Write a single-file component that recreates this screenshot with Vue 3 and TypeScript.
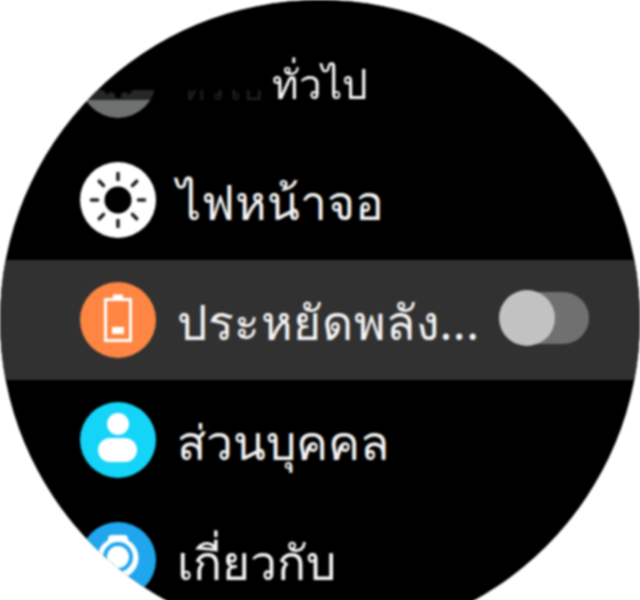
<script setup lang="ts">
const sunRays = [0, 45, 90, 135, 180, 225, 270, 315];
const gearTeeth = [135, 180, 225];
</script>

<template>
  <div class="watch">
    <div class="header">
      <span class="title">ทั่วไป</span>
    </div>

    <div class="list">
      <div class="row">
        <svg class="icon" viewBox="0 0 76 76">
          <circle cx="38" cy="38" r="38" fill="#8a8f8c" />
          <circle cx="38" cy="38" r="14" fill="#000" />
          <rect
            v-for="a in gearTeeth"
            :key="a"
            x="35"
            y="20"
            width="6"
            height="8"
            fill="#000"
            :transform="`rotate(${a} 38 38)`"
          />
        </svg>
        <span class="label">ทั่วไป</span>
      </div>

      <div class="row">
        <svg class="icon" viewBox="0 0 76 76">
          <circle cx="38" cy="38" r="38" fill="#fff" />
          <circle cx="38" cy="38" r="13.5" fill="#000" />
          <line
            v-for="a in sunRays"
            :key="a"
            x1="38"
            y1="11.5"
            x2="38"
            y2="17.5"
            stroke="#222"
            stroke-width="3.6"
            stroke-linecap="round"
            :transform="`rotate(${a} 38 38)`"
          />
        </svg>
        <span class="label">ไฟหน้าจอ</span>
      </div>

      <div class="row active">
        <svg class="icon" viewBox="0 0 76 76">
          <circle cx="38" cy="38" r="38" fill="#ff8642" />
          <rect x="33" y="12.5" width="10" height="5" fill="#fff" />
          <rect x="25.5" y="17.5" width="25" height="41" fill="none" stroke="#fff" stroke-width="3" />
          <rect x="32" y="45" width="12" height="7" fill="#fff" />
        </svg>
        <span class="label">ประหยัดพลัง...</span>
        <div class="toggle">
          <div class="thumb"></div>
        </div>
      </div>

      <div class="row">
        <svg class="icon" viewBox="0 0 76 76">
          <circle cx="38" cy="38" r="38" fill="#14d4f8" />
          <circle cx="38" cy="22" r="11" fill="#fff" />
          <rect x="18" y="36" width="39" height="24" rx="12" fill="#fff" />
        </svg>
        <span class="label">ส่วนบุคคล</span>
      </div>

      <div class="row">
        <svg class="icon" viewBox="0 0 76 76">
          <circle cx="38" cy="38" r="38" fill="#1fa6ee" />
          <circle cx="38" cy="36" r="20.5" fill="#fff" />
          <rect x="28" y="13" width="20" height="10" rx="4" fill="#fff" />
          <circle cx="38" cy="35" r="13" fill="none" stroke="#1fa6ee" stroke-width="4" />
        </svg>
        <span class="label">เกี่ยวกับ</span>
      </div>
    </div>
  </div>
</template>

<style scoped>
.watch {
  position: relative;
  width: 640px;
  height: 640px;
  border-radius: 50%;
  overflow: hidden;
  background: #000;
  font-family: "Noto Sans", "DejaVu Sans", sans-serif;
  color: #f4f4f4;
  filter: blur(0.8px);
}

.header {
  position: absolute;
  top: 0;
  left: 0;
  right: 0;
  height: 100px;
  z-index: 2;
  display: flex;
  justify-content: center;
  background: linear-gradient(#000 90px, rgba(0, 0, 0, 0.65) 90px);
}

.title {
  margin-top: 52px;
  font-size: 40.5px;
  line-height: 64px;
  height: 64px;
}

.list {
  padding-top: 20px;
}

.row {
  height: 120px;
  display: flex;
  align-items: center;
  padding-left: 80px;
  gap: 21px;
  box-sizing: border-box;
}

.row.active {
  background: #313131;
}

.icon {
  width: 76px;
  height: 76px;
  flex: none;
}

.row:first-child .icon {
  opacity: 0.8;
}

.label {
  font-size: 48px;
  line-height: 72px;
  margin-top: 4px;
  white-space: nowrap;
}

.row:first-child .label {
  font-size: 34px;
  margin-top: 14px;
  margin-left: 6px;
  opacity: 0.35;
}

.row.active .label {
  width: 302px;
  flex: none;
  letter-spacing: 0.6px;
}

.toggle {
  position: relative;
  margin-left: 9px;
  width: 80px;
  height: 52px;
  border-radius: 26px;
  background: #707070;
  margin-top: -4px;
}

.thumb {
  position: absolute;
  left: -10px;
  top: -2px;
  width: 56px;
  height: 56px;
  border-radius: 50%;
  background: #c2c2c2;
}
</style>
<style>
html,
body {
  background: #fff;
  overflow: hidden;
}
</style>
